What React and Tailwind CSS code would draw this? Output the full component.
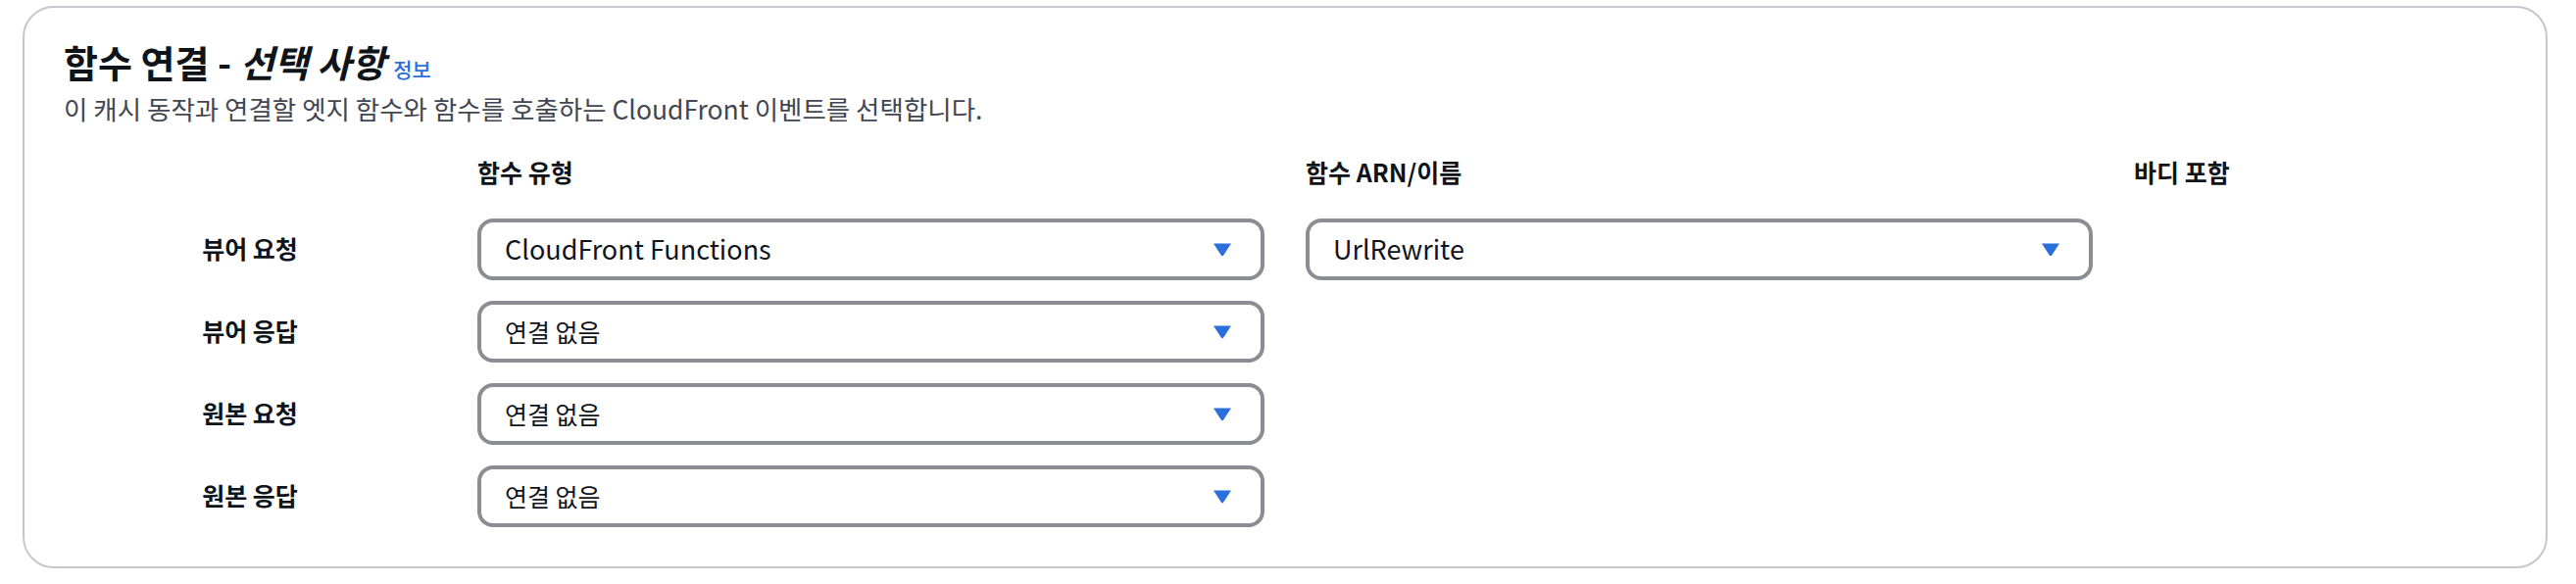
const FONT = { fontFamily: '"Noto Sans CJK KR", "Noto Sans", sans-serif' };

const rows = [
  { label: "뷰어 요청", type: "CloudFront Functions", arn: "UrlRewrite" },
  { label: "뷰어 응답", type: "연결 없음" },
  { label: "원본 요청", type: "연결 없음" },
  { label: "원본 응답", type: "연결 없음" },
];

const Caret = () => (
  <svg width="20" height="15" viewBox="0 0 20 15" className="shrink-0">
    <path d="M1 1.5 L19 1.5 L11.2 13.6 Q10 15 8.8 13.6 Z" fill="#2a6fdb" />
  </svg>
);

// latin values render a bit larger in the reference than hangul ones
const Select = ({ value, latin }) => (
  <div className="h-[63px] flex items-center justify-between border-4 border-[#8c8c94] rounded-[16px] pl-[24px] pr-[29px] bg-white">
    <span className={`${latin ? "text-[27px]" : "text-[25px]"} leading-[36px] text-[#0f141a]`}>{value}</span>
    <Caret />
  </div>
);

export default function App() {
  return (
    <div className="bg-white w-[2628px] h-[596px] pt-[6px] pl-[23px]" style={FONT}>
      <div className="w-[2576px] border-2 border-[#c6c6cd] rounded-[32px] px-[40px] pt-[32px] pb-[40px]">
        {/* Header */}
        <div className="flex items-baseline">
          <h2 className="text-[38px] leading-[46px] font-bold text-[#0f141a]">
            함수 연결 - <span className="italic">선택 사항</span>
          </h2>
          <a className="ml-[8px] text-[21px] font-medium text-[#2a6fdb]">정보</a>
        </div>
        <p className="mt-[6px] text-[26.5px] leading-[36px] text-[#424650]">
          이 캐시 동작과 연결할 엣지 함수와 함수를 호출하는 CloudFront 이벤트를 선택합니다.
        </p>

        {/* Column headers */}
        <div className="mt-[28px] grid grid-cols-[380px_803px_803px_1fr] gap-x-[42px] text-[25px] leading-[36px] font-bold text-[#0f141a]">
          <div></div>
          <div>함수 유형</div>
          <div>함수 ARN/이름</div>
          <div>바디 포함</div>
        </div>

        {/* Rows */}
        <div className="mt-[30px] grid grid-cols-[380px_803px_803px_1fr] gap-x-[42px] gap-y-[21px]">
          {rows.map((row) => (
            <div key={row.label} className="contents">
              <div className="flex items-center justify-center text-[25px] font-bold text-[#0f141a]">
                {row.label}
              </div>
              <Select value={row.type} latin={!!row.arn} />
              {row.arn ? <Select value={row.arn} latin /> : <div></div>}
              <div></div>
            </div>
          ))}
        </div>
      </div>
    </div>
  );
}
